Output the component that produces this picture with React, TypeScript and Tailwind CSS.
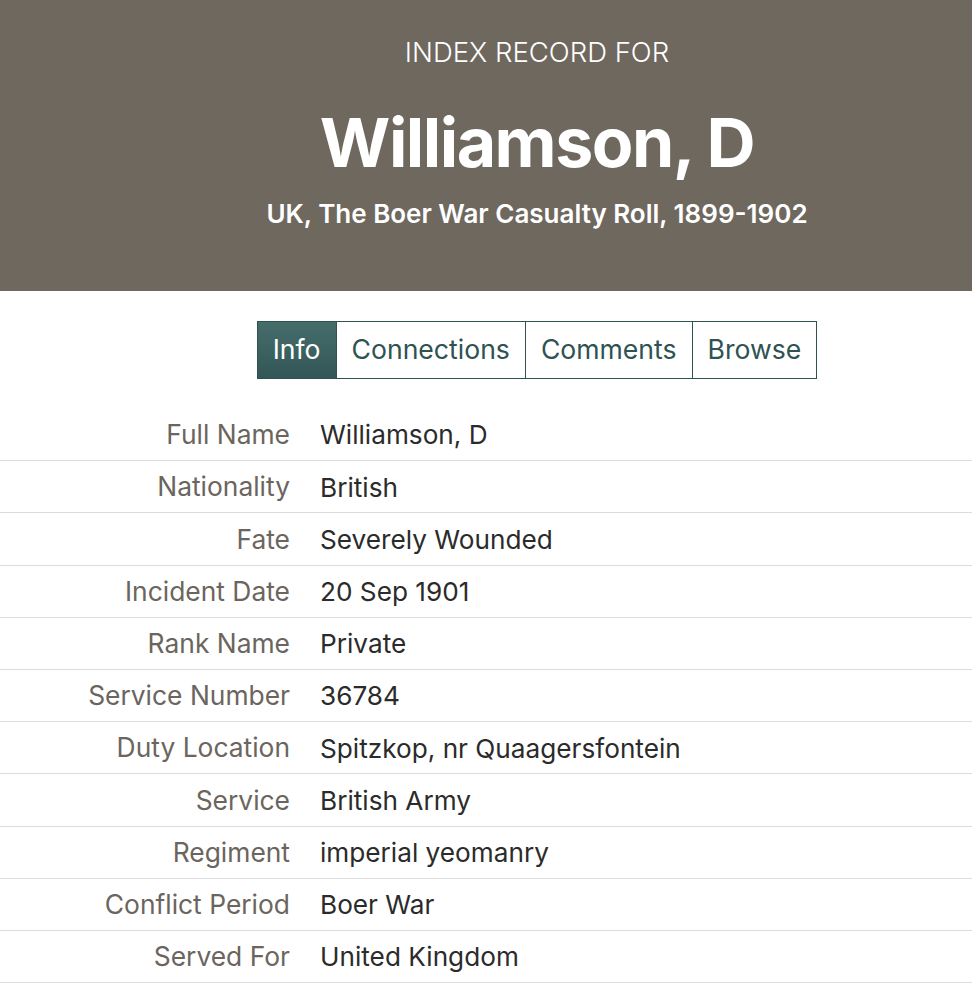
import React from 'react';

const rows: [string, string][] = [
  ['Full Name', 'Williamson, D'],
  ['Nationality', 'British'],
  ['Fate', 'Severely Wounded'],
  ['Incident Date', '20 Sep 1901'],
  ['Rank Name', 'Private'],
  ['Service Number', '36784'],
  ['Duty Location', 'Spitzkop, nr Quaagersfontein'],
  ['Service', 'British Army'],
  ['Regiment', 'imperial yeomanry'],
  ['Conflict Period', 'Boer War'],
  ['Served For', 'United Kingdom'],
];

const tabs = ['Info', 'Connections', 'Comments', 'Browse'];

const App: React.FC = () => {
  return (
    <div className="min-h-screen bg-white font-['Inter',sans-serif]">
      {/* Header */}
      <div className="h-[291px] bg-[#6f685f] pl-[102px] flex flex-col items-center text-white">
        <div className="mt-[36px] text-[27.5px] font-light leading-[32px]">INDEX RECORD FOR</div>
        <h1 className="mt-[34px] text-[68px] font-bold leading-[80px] tracking-[-1.5px]">Williamson, D</h1>
        <div className="mt-[16px] text-[26px] font-semibold leading-[32px]">UK, The Boer War Casualty Roll, 1899-1902</div>
      </div>

      {/* Tabs */}
      <div className="pl-[102px] pt-[30px] flex justify-center">
        <div className="flex border border-[#2f5252] h-[58px]">
          {tabs.map((t, i) => (
            <div
              key={t}
              className={
                i === 0
                  ? 'flex items-center px-[15px] text-[26.6px] text-white bg-gradient-to-b from-[#456d6c] to-[#335656]'
                  : 'flex items-center px-[15px] text-[26.6px] text-[#2f5252] border-l border-[#2f5252]'
              }
            >
              {t}
            </div>
          ))}
        </div>
      </div>

      {/* Details */}
      <div className="mt-[30px]">
        {rows.map(([label, value]) => (
          <div key={label} className="flex h-[52.2px] items-center pt-[1px] border-b border-[#dcdcdc]">
            <div className="w-[290px] text-right text-[26.4px] text-[#6b655e]">{label}</div>
            <div className="pl-[30px] text-[26.2px] text-[#2b2b2b]">{value}</div>
          </div>
        ))}
      </div>
    </div>
  );
};

export default App;
